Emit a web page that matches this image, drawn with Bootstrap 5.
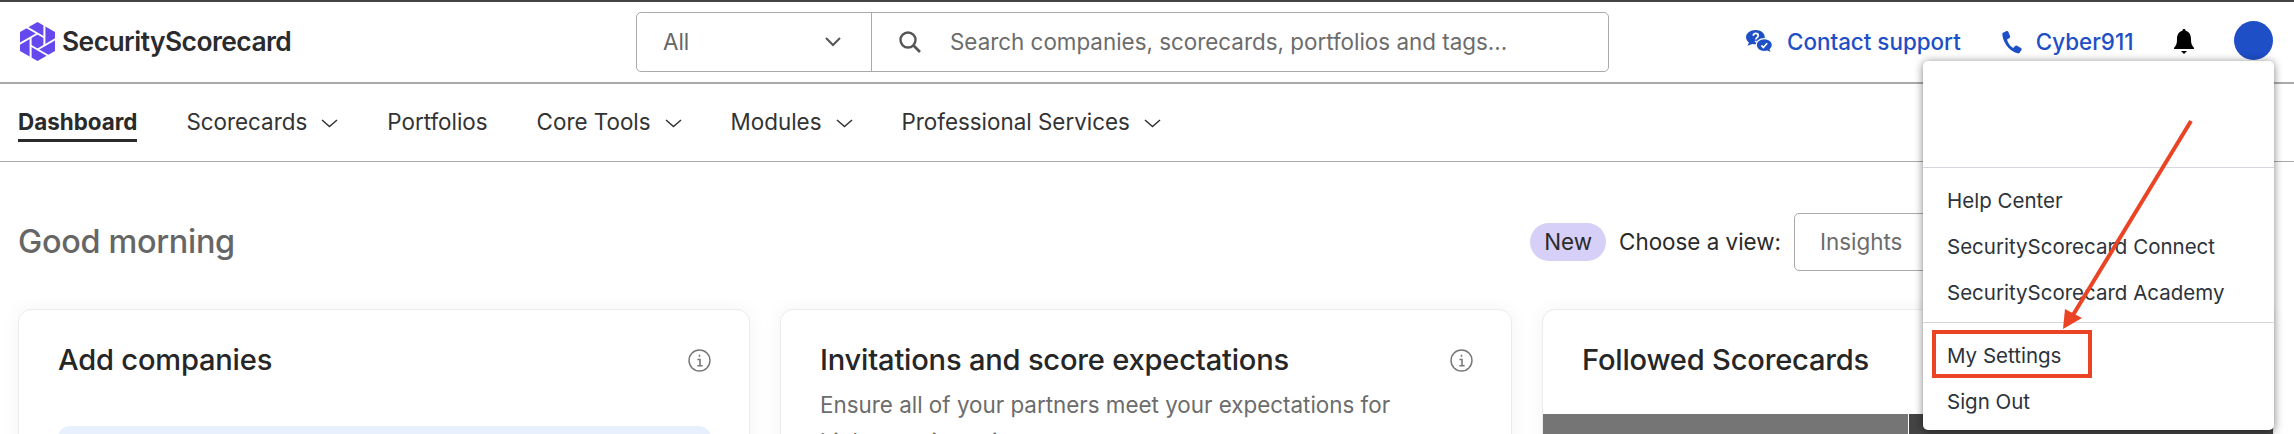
<!DOCTYPE html>
<html lang="en">
<head>
    <meta charset="UTF-8">
    <title>SecurityScorecard</title>
    <link href="https://cdn.jsdelivr.net/npm/bootstrap@5.3.0/dist/css/bootstrap.min.css" rel="stylesheet">
    <style>
        html, body { height: 434px; overflow: hidden; }
        body { font-family: Inter, "Liberation Sans", sans-serif; color: #2a2a2a; background: #fff; position: relative; border-top: 2px solid #444; }
        .top-bar { height: 82px; border-bottom: 2px solid #aaa; padding-left: 20px; }
        .brand-box { width: 616px; }
        .brand-name { font-size: 26.4px; font-weight: 600; letter-spacing: -.55px; color: #2b2b2d; margin-left: 7px; }
        .search-wrap { width: 973px; height: 60px; border: 1px solid #aaa; border-radius: 5px; font-size: 22.4px; flex: none; }
        .search-scope { width: 235px; padding: 0 30px 0 26px; border-right: 1px solid #aaa; color: #666; }
        .search-icon { margin-left: 27px; }
        .search-text { color: #6c6c6c; margin-left: 29px; white-space: nowrap; }
        .right-links { margin-left: 136px; gap: 39px; color: #1f4fc6; font-size: 22.4px; font-weight: 500; white-space: nowrap; }
        .link-icon { margin-right: 13px; }
        .avatar-dot { width: 39px; height: 39px; border-radius: 50%; background: #1f4fc6; margin-top: -3px; }
        .nav-row { height: 78px; border-bottom: 1px solid #aaa; padding: 0 0 2px 18px; font-size: 22.4px; gap: 49px; color: #333; }
        .nav-cur { font-weight: 700; border-bottom: 3px solid #2a2a2a; padding-bottom: 3px; margin-top: 6px; color: #2a2a2a; line-height: 28px; }
        .nav-entry { white-space: nowrap; line-height: 28px; }
        .nav-entry svg { margin-left: 14px; vertical-align: 2px; }
        .greet-row { padding: 51px 200px 28px 18px; }
        .greet-text { font-size: 32.4px; font-weight: 500; color: #666; letter-spacing: -.3px; }
        .view-chooser { white-space: nowrap; font-size: 22.4px; }
        .new-pill { background: #d6cff8; border-radius: 19px; padding: 0 14px; line-height: 38px; margin-right: 13px; }
        .view-box { width: 300px; height: 58px; border: 1px solid #aaa; border-radius: 5px; padding-left: 25px; color: #6c6c6c; margin-left: 13px; }
        .card-clip { height: 135px; padding: 10px 0 0 18px; gap: 30px; overflow: hidden; }
        .dash-card { width: 732px; height: 200px; border: 1px solid #ececec; border-radius: 13px; box-shadow: 0 0 20px rgba(0,0,0,.05); padding: 34px 38px 0 39px; flex: none; background: #fff; }
        .dash-title { font-size: 29.1px; font-weight: 500; color: #262626; letter-spacing: -.2px; line-height: 32px; }
        .dash-sub { font-size: 22.4px; color: #6c6c6c; line-height: 37px; margin-top: 10px; max-width: 600px; }
        .blue-box { height: 100px; background: #e8f0fd; border-radius: 12px; margin-top: 50px; }
        .grey-band { height: 60px; margin: 38px -38px 0 -39px; }
        .grey-a { width: 365px; background: #757575; }
        .grey-b { background: #444; margin-left: 1px; flex: 1; }
        .user-menu { position: absolute; left: 1923px; top: 59px; width: 351px; height: 369px; background: #fff; border-radius: 5px; box-shadow: 0 1px 9px rgba(0,0,0,.5); font-size: 20.5px; color: #2d333a; }
        .menu-top { height: 107px; border-bottom: 1px solid #d4d7de; }
        .menu-group { padding: 10px 0 6px; }
        .menu-group + .menu-group { border-top: 1px solid #d4d7de; }
        .menu-link { height: 46px; line-height: 46px; padding-left: 24px; white-space: nowrap; }
        .arrow-layer { position: absolute; left: 0; top: -2px; pointer-events: none; }
    </style>
</head>
<body>
<div class="top-bar d-flex align-items-center">
    <div class="brand-box d-flex align-items-center">
        <svg width="35" height="39" viewBox="0 0 35 39">
            <path fill="#6549ee" d="M17.5 0 35 10V29L17.500 39 0 29V10Z"/>
            <g stroke="#fff" stroke-width="2" fill="none">
                <path d="M24.400 15.500 17.500 11.500 6.500 5.200"/>
                <path d="M24.400 23.500V15.500V0"/>
                <path d="M17.500 27.500 24.400 23.500 38.200 15.500"/>
                <path d="M10.600 23.500 17.500 27.500 31.300 35.500"/>
                <path d="M10.600 15.500V23.500V40"/>
                <path d="M17.500 11.500 10.600 15.500-3.200 23.500"/>
            </g>
        </svg>
        <span class="brand-name">SecurityScorecard</span>
    </div>
    <div class="search-wrap d-flex align-items-center">
        <div class="search-scope d-flex align-items-center justify-content-between h-100">
            <span>All</span>
            <svg width="16" height="10" viewBox="0 0 16 10"><path d="M1 1l7 7 7-7" fill="none" stroke="#555" stroke-width="2"/></svg>
        </div>
        <svg class="search-icon" width="22" height="22" viewBox="0 0 22 22"><circle cx="9" cy="9" r="7.500" fill="none" stroke="#555" stroke-width="2.400"/><path d="M14.500 14.500l6.500 6.500" stroke="#555" stroke-width="2.600"/></svg>
        <span class="search-text">Search companies, scorecards, portfolios and tags...</span>
    </div>
    <div class="right-links d-flex align-items-center">
        <span class="d-flex align-items-center">
            <svg class="link-icon" width="29" height="24" viewBox="0 0 28 25"><path fill="#1f4fc6" d="M10 0c5.500 0 9.500 3.300 9.500 7.500S15.500 15 10 15c-1.300 0-2.500-.2-3.500-.5L1.500 16.500l1.500-3.600C1.100 11.500 0 9.700 0 7.500 0 3.300 4.500 0 10 0z"/><path fill="#1f4fc6" stroke="#fff" stroke-width="1.400" d="M19 9c5 0 8.500 2.800 8.500 6.500 0 1.900-.9 3.500-2.300 4.700l1.600 4-4.800-2.100c-.9.200-1.900.4-3 .4-5 0-8.500-3-8.500-6.800S14 9 19 9z"/><path d="M16 16l2 2.200 4-4.400" fill="none" stroke="#fff" stroke-width="1.800"/><path d="M7.500 6c0-3.400 5.200-3.400 5.200 0 0 2-2.600 2-2.600 4M10.100 11.200v1.600" fill="none" stroke="#fff" stroke-width="1.800"/></svg>
            Contact support
        </span>
        <span class="d-flex align-items-center">
            <svg class="link-icon" width="23" height="24" viewBox="0 0 21 24"><path fill="#1f4fc6" d="M5.500 1 1.500 3C.5 9 7 22 18 23.500l2.500-3.500c.4-.8.200-1.500-.5-2l-4-2.300c-.8-.4-1.400-.2-2 .4l-1.700 2C9 16.500 6.800 12.500 6 9.500L8.500 8c.7-.5.800-1.100.6-1.800L7.300 1.700C7 1 6.300.7 5.500 1z"/></svg>
            Cyber911
        </span>
        <svg width="22" height="26" viewBox="0 0 20 26"><path d="M10 0c1 0 1.600.7 1.600 1.700C15.500 2.700 17 6 17 10c0 5 1 6.500 3 9v1H0v-1c2-2.500 3-4 3-9 0-4 1.500-7.300 5.400-8.300C8.400.7 9 0 10 0z" fill="#000"/><path d="M7 22h6l-3 3z" fill="#000"/></svg>
        <div class="avatar-dot"></div>
    </div>
</div>

<div class="nav-row d-flex align-items-center">
    <span class="nav-cur">Dashboard</span>
    <span class="nav-entry">Scorecards<svg width="17" height="9" viewBox="0 0 17 9"><path d="M1 1l7.500 6.500L16 1" fill="none" stroke="#333" stroke-width="1.500"/></svg></span>
    <span class="nav-entry">Portfolios</span>
    <span class="nav-entry">Core Tools<svg width="17" height="9" viewBox="0 0 17 9"><path d="M1 1l7.500 6.500L16 1" fill="none" stroke="#333" stroke-width="1.500"/></svg></span>
    <span class="nav-entry">Modules<svg width="17" height="9" viewBox="0 0 17 9"><path d="M1 1l7.500 6.500L16 1" fill="none" stroke="#333" stroke-width="1.500"/></svg></span>
    <span class="nav-entry">Professional Services<svg width="17" height="9" viewBox="0 0 17 9"><path d="M1 1l7.500 6.500L16 1" fill="none" stroke="#333" stroke-width="1.500"/></svg></span>
</div>

<div class="greet-row d-flex align-items-center justify-content-between">
    <span class="greet-text">Good morning</span>
    <div class="view-chooser d-flex align-items-center">
        <span class="new-pill">New</span>
        <span>Choose a view:</span>
        <span class="view-box d-flex align-items-center">Insights</span>
    </div>
</div>

<div class="card-clip d-flex">
    <div class="dash-card">
        <div class="d-flex justify-content-between align-items-center"><span class="dash-title">Add companies</span><svg width="23" height="23" viewBox="0 0 22 22"><circle cx="11" cy="11" r="10" fill="none" stroke="#777" stroke-width="1.400"/><path d="M9 10h2.500v6M9 16h5M11 5.500v2" fill="none" stroke="#777" stroke-width="1.500"/></svg></div>
        <div class="blue-box"></div>
    </div>
    <div class="dash-card">
        <div class="d-flex justify-content-between align-items-center"><span class="dash-title">Invitations and score expectations</span><svg width="23" height="23" viewBox="0 0 22 22"><circle cx="11" cy="11" r="10" fill="none" stroke="#777" stroke-width="1.400"/><path d="M9 10h2.500v6M9 16h5M11 5.500v2" fill="none" stroke="#777" stroke-width="1.500"/></svg></div>
        <div class="dash-sub">Ensure all of your partners meet your expectations for high security ratings</div>
    </div>
    <div class="dash-card">
        <div class="d-flex"><span class="dash-title">Followed Scorecards</span></div>
        <div class="grey-band d-flex"><div class="grey-a"></div><div class="grey-b"></div></div>
    </div>
</div>

<div class="user-menu">
    <div class="menu-top"></div>
    <div class="menu-group">
        <div class="menu-link">Help Center</div>
        <div class="menu-link">SecurityScorecard Connect</div>
        <div class="menu-link">SecurityScorecard Academy</div>
    </div>
    <div class="menu-group">
        <div class="menu-link">My Settings</div>
        <div class="menu-link">Sign Out</div>
    </div>
</div>

<svg class="arrow-layer" width="2294" height="434" viewBox="0 0 2294 434">
    <rect x="1934" y="332" width="156" height="44" fill="none" stroke="#ea4425" stroke-width="4"/>
    <line x1="2191" y1="121" x2="2073" y2="315" stroke="#ea4425" stroke-width="4"/>
    <path d="M2063 329 2065 309 2082 318Z" fill="#ea4425"/>
</svg>
</body>
</html>
